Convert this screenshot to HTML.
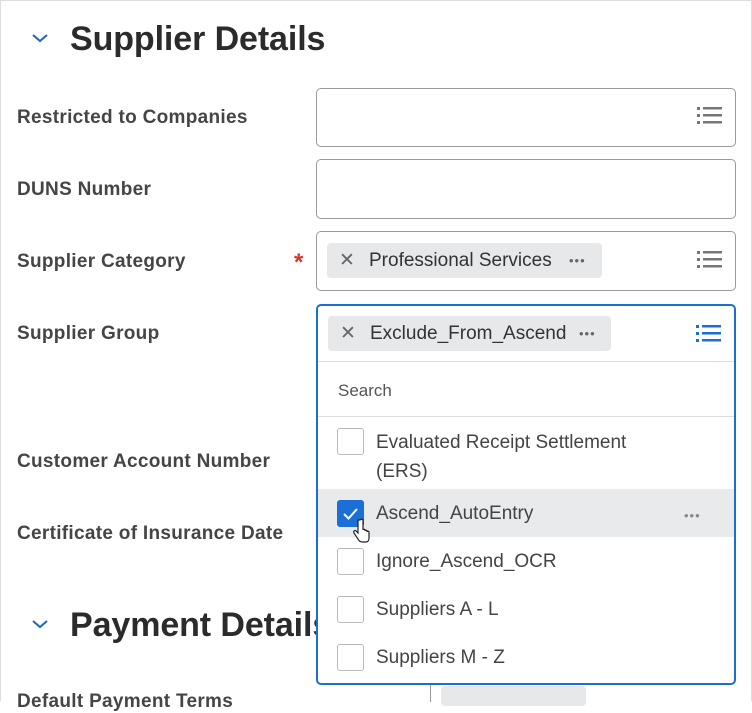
<!DOCTYPE html>
<html><head><style>
body{margin:0;width:752px;height:700px;overflow:hidden;background:#fff;font-family:"Liberation Sans",Arial,sans-serif;position:relative}
.a{position:absolute}
.lbl{position:absolute;left:17px;font-size:19px;font-weight:bold;color:#454545;letter-spacing:0.3px}
.box{position:absolute;left:316px;width:418px;border:1px solid #9a9a9a;border-radius:5px;background:#fff}
.h{position:absolute;left:70px;font-size:34px;font-weight:bold;color:#2b2b2b;letter-spacing:-0.1px}
.chip{position:absolute;background:#e6e8ea;border-radius:4px;height:35px;font-size:19px;color:#333;line-height:35px}
.dots{position:absolute;font-size:13px;color:#666;letter-spacing:1px}
.cb{position:absolute;left:337px;width:25px;height:25px;border:1px solid #bbb;border-radius:3px;background:#fff}
.it{position:absolute;left:376px;font-size:19px;color:#444}
</style></head><body>
<div class="a" style="left:0;top:0;width:750px;height:700px;border-left:1px solid #ddd;border-right:1px solid #ddd;border-top:1px solid #ddd"></div>
<svg class="a" style="left:30px;top:31px" width="20" height="14"><path d="M3 4l7 6 7-6" stroke="#1f66b5" stroke-width="2" fill="none"/></svg>
<div class="h" style="top:20px">Supplier Details</div>
<div class="lbl" style="top:107px">Restricted to Companies</div>
<div class="lbl" style="top:179px">DUNS Number</div>
<div class="lbl" style="top:251px">Supplier Category</div>
<div class="a" style="left:294px;top:249px;color:#d32;font-size:24px;font-weight:bold">*</div>
<div class="lbl" style="top:323px">Supplier Group</div>
<div class="lbl" style="top:451px">Customer Account Number</div>
<div class="lbl" style="top:523px">Certificate of Insurance Date</div>
<svg class="a" style="left:30px;top:617px" width="20" height="14"><path d="M3 4l7 6 7-6" stroke="#1f66b5" stroke-width="2" fill="none"/></svg>
<div class="h" style="top:606px">Payment Details</div>
<div class="lbl" style="top:691px">Default Payment Terms</div>
<div class="a" style="left:430px;top:682px;width:1px;height:20px;background:#999"></div>
<div class="a" style="left:441px;top:686px;width:145px;height:20px;background:#e6e8ea;border-radius:4px"></div>

<div class="box" style="top:88px;height:57px"></div>
<svg class="a" style="left:697px;top:106px" width="26" height="20"><g fill="#777"><rect x="0" y="1" width="3" height="3"/><rect x="6" y="1" width="19" height="2.5"/><rect x="0" y="8" width="3" height="3"/><rect x="6" y="8" width="19" height="2.5"/><rect x="0" y="15" width="3" height="3"/><rect x="6" y="15" width="19" height="2.5"/></g></svg>
<div class="box" style="top:159px;height:58px"></div>
<div class="box" style="top:231px;height:58px"></div>
<div class="chip" style="left:327px;top:243px;width:275px"><span style="position:absolute;left:12px;color:#666">✕</span><span style="position:absolute;left:42px">Professional Services</span><span class="dots" style="left:242px;top:0">•••</span></div>
<svg class="a" style="left:697px;top:250px" width="26" height="20"><g fill="#777"><rect x="0" y="1" width="3" height="3"/><rect x="6" y="1" width="19" height="2.5"/><rect x="0" y="8" width="3" height="3"/><rect x="6" y="8" width="19" height="2.5"/><rect x="0" y="15" width="3" height="3"/><rect x="6" y="15" width="19" height="2.5"/></g></svg>

<div class="a" style="left:316px;top:304px;width:416px;height:377px;border:2px solid #1a70d0;border-radius:5px;background:#fff;overflow:hidden">
 <div class="chip" style="left:10px;top:10px;width:283px"><span style="position:absolute;left:12px;color:#666">✕</span><span style="position:absolute;left:42px">Exclude_From_Ascend</span><span class="dots" style="left:251px;top:0">•••</span></div>
 <svg class="a" style="left:378px;top:18px" width="26" height="20"><g fill="#1a6fd0"><rect x="0" y="1" width="3" height="3"/><rect x="6" y="1" width="19" height="2.5"/><rect x="0" y="8" width="3" height="3"/><rect x="6" y="8" width="19" height="2.5"/><rect x="0" y="15" width="3" height="3"/><rect x="6" y="15" width="19" height="2.5"/></g></svg>
 <div class="a" style="left:0;top:55px;width:416px;height:1px;background:#ddd"></div>
 <div class="a" style="left:20px;top:75px;font-size:17px;color:#555">Search</div>
 <div class="a" style="left:0;top:110px;width:416px;height:1px;background:#ddd"></div>
 <div class="a" style="left:0;top:183px;width:416px;height:48px;background:#e8eaec"></div>
 <div class="dots" style="left:366px;top:202px;color:#888">•••</div>
</div>
<div class="cb" style="top:428px"></div>
<div class="it" style="top:428px;line-height:29px">Evaluated Receipt Settlement<br>(ERS)</div>
<div class="cb" style="top:500px;background:#1a70d8;border-color:#1a70d8"><svg width="25" height="25"><path d="M6 13l4.5 4.5L19 8" stroke="#fff" stroke-width="2" fill="none"/></svg></div>
<div class="it" style="top:503px">Ascend_AutoEntry</div>
<div class="cb" style="top:548px"></div>
<div class="it" style="top:551px">Ignore_Ascend_OCR</div>
<div class="cb" style="top:596px"></div>
<div class="it" style="top:599px">Suppliers A - L</div>
<div class="cb" style="top:644px"></div>
<div class="it" style="top:647px">Suppliers M - Z</div>
<svg class="a" style="left:353px;top:518px" width="18" height="26"><path d="M5 2v13l-2-2c-1-1-3 0-2 2l4 6c1 2 2 3 5 3h3c2 0 3-2 3-4v-6c0-1-2-1-2 0v-1c0-1-2-1-2 0v-1c0-1-2-1-2 0V2c0-1-3-1-3 0z" fill="#fff" stroke="#222" stroke-width="1.2"/></svg>
</body></html>
